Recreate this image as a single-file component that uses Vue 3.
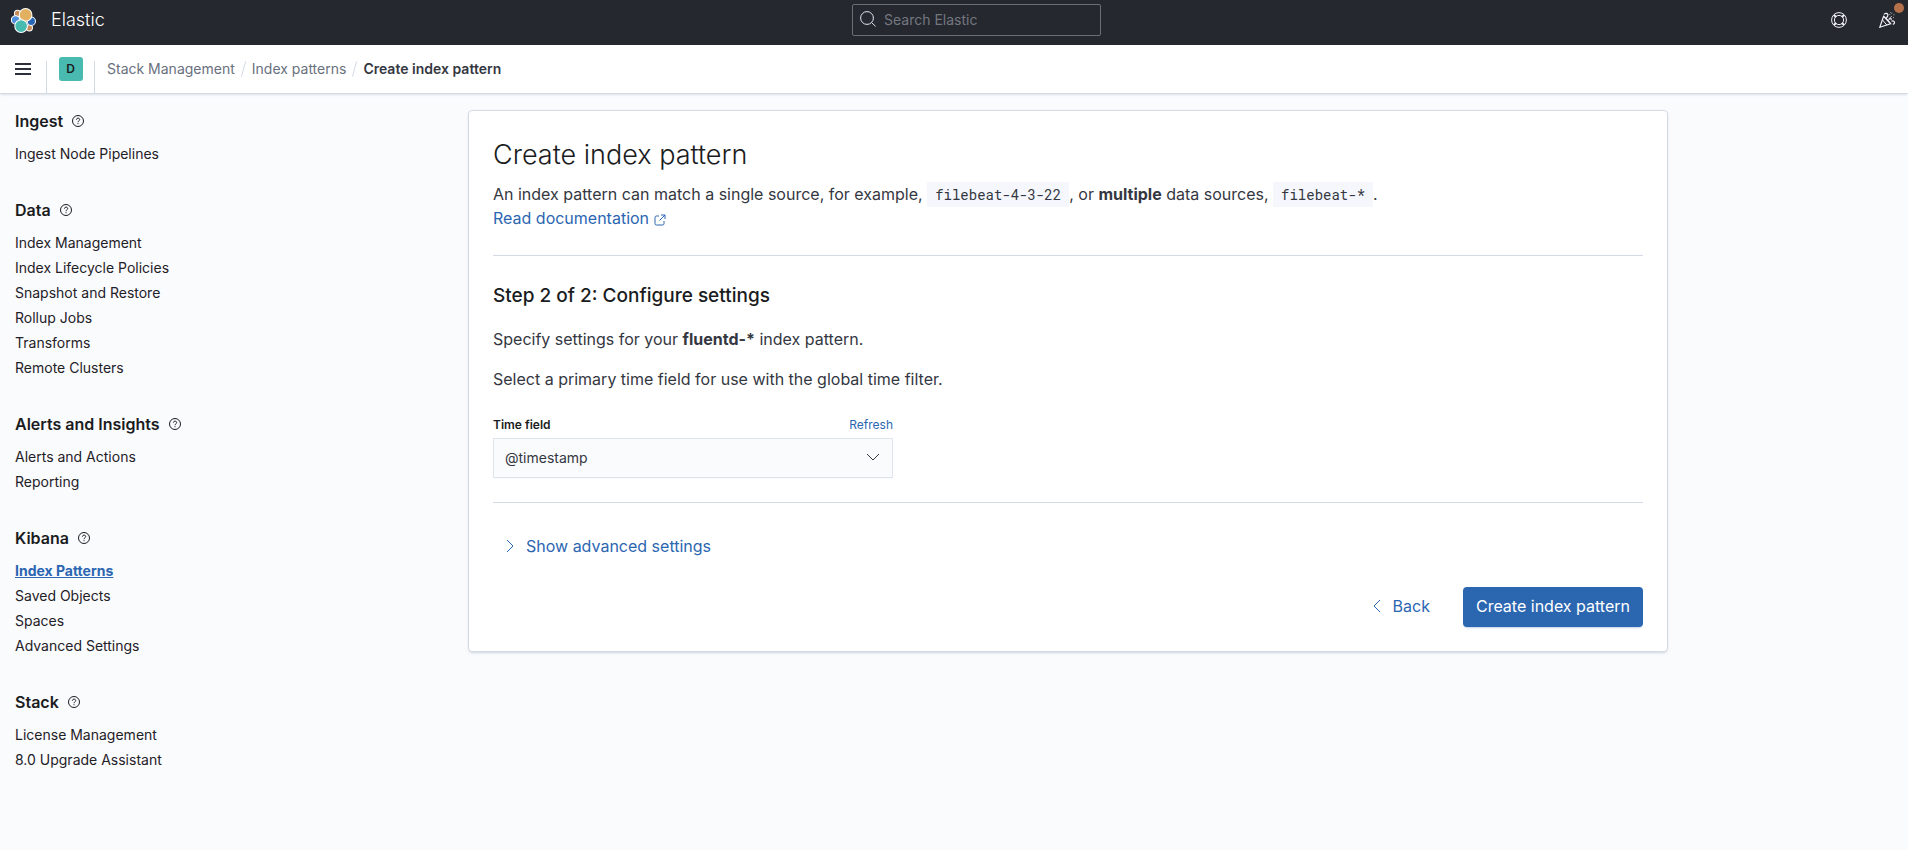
<script setup>
import { ref } from 'vue'

const sections = [
  { title: 'Ingest', items: ['Ingest Node Pipelines'] },
  {
    title: 'Data',
    items: [
      'Index Management',
      'Index Lifecycle Policies',
      'Snapshot and Restore',
      'Rollup Jobs',
      'Transforms',
      'Remote Clusters',
    ],
  },
  { title: 'Alerts and Insights', items: ['Alerts and Actions', 'Reporting'] },
  { title: 'Kibana', items: ['Index Patterns', 'Saved Objects', 'Spaces', 'Advanced Settings'] },
  { title: 'Stack', items: ['License Management', '8.0 Upgrade Assistant'] },
]
const current = 'Index Patterns'
const query = ref('')
const timeField = ref('@timestamp')
</script>

<template>
  <div class="page">
    <header class="topbar">
      <a href="#" class="brand">
        <svg class="brand-logo" viewBox="0 0 24 24" aria-hidden="true">
          <g stroke="#fff" stroke-width="1">
            <circle cx="6.3" cy="5.2" r="3" fill="#c58a58" />
            <circle cx="17.6" cy="19" r="3" fill="#c58a58" />
            <circle cx="4.4" cy="11.4" r="4" fill="#4f8fdb" />
            <circle cx="19.5" cy="12.7" r="4" fill="#2766b5" />
            <circle cx="14" cy="6.6" r="6.1" fill="#e3b062" />
            <circle cx="9.7" cy="17.4" r="6.1" fill="#47bbb0" />
          </g>
        </svg>
        <span>Elastic</span>
      </a>
      <div class="search">
        <svg class="search-icon" viewBox="0 0 16 16" aria-hidden="true">
          <circle cx="7" cy="7" r="6.4" />
          <path d="M11.6 11.6L15.6 15.4" />
        </svg>
        <input v-model="query" type="search" placeholder="Search Elastic" aria-label="Search Elastic" />
      </div>
      <div class="actions">
        <button type="button" class="icon-button" aria-label="Help">
          <svg viewBox="0 0 16 16" aria-hidden="true">
            <circle cx="8" cy="8" r="7.4" />
            <circle cx="8" cy="8" r="4.6" />
            <path
              stroke-width="2"
              d="M3 3L5 5M13 3L11 5M3 13L5 11M13 13L11 11"
            />
          </svg>
        </button>
        <button type="button" class="icon-button" aria-label="What's new">
          <svg viewBox="0 0 16 16" aria-hidden="true">
            <path stroke-width="1.2" d="M4.6 4.3L0.8 15.2L11.6 11.8Z" />
            <path d="M4.6 4.3C6.6 5.4 10.2 8.8 11.6 11.8M3.4 7.8L7.8 13" />
            <path stroke-width="1.2" d="M5 2.6C6 .6 9.4 1 8.8 3.6C8.6 4.7 7.4 5.5 7.6 6.3M9.6 7.6C10.8 6.2 12 6.6 12.6 7.6M12.4 9.2C14.6 8.2 16 10 15.2 11.6C15 12 14.4 12.4 13.8 12.4" />
            <path d="M11 5.8L12.6 4.2M10.8 2.2V2.9M12.8 .8V1.5M14.6 2.8H15.3M14 5.6H14.7M11.4 .4H11.9" />
          </svg>
          <span class="dot"></span>
        </button>
      </div>
    </header>

    <div class="subbar">
      <button type="button" class="menu-button" aria-label="Toggle primary navigation">
        <svg viewBox="0 0 16 12" aria-hidden="true"><path d="M0 0H16V2H0zM0 5H16V7H0zM0 10H16V12H0z" /></svg>
      </button>
      <div class="space-cell">
        <button type="button" class="avatar" aria-label="D, default space">D</button>
      </div>
      <nav class="breadcrumbs" aria-label="Breadcrumbs">
        <a href="#">Stack Management</a>
        <i class="slash"></i>
        <a href="#">Index patterns</a>
        <i class="slash"></i>
        <strong aria-current="page">Create index pattern</strong>
      </nav>
    </div>

    <div class="body">
      <nav class="sidebar" aria-label="Stack Management">
        <section v-for="s in sections" :key="s.title">
          <h2>
            {{ s.title }}
            <svg class="help" viewBox="0 0 12 12" aria-hidden="true">
              <circle cx="6" cy="6" r="5.5" />
              <path d="M4.4 4.7C4.4 2.6 7.7 2.6 7.7 4.6C7.7 5.8 6 5.8 6 7.2M6 8.2V9.2" />
            </svg>
          </h2>
          <ul>
            <li v-for="item in s.items" :key="item">
              <a href="#" :class="{ selected: item === current }">{{ item }}</a>
            </li>
          </ul>
        </section>
      </nav>

      <main>
        <div class="panel">
          <h1>Create index pattern</h1>
          <p class="intro">
            An index pattern can match a single source, for example, <code>filebeat-4-3-22</code>, or
            <strong>multiple</strong> data sources, <code>filebeat-*</code>.<br />
            <a href="#">Read documentation
              <svg class="external" viewBox="0 0 12 12" aria-hidden="true">
                <path d="M5 2H2.5Q1 2 1 3.500V9.500Q1 11 2.500 11H8.500Q10 11 10 9.500V7M7 1H11V5M11 1L5.500 6.500" />
              </svg></a>
          </p>
          <hr />
          <h2>Step 2 of 2: Configure settings</h2>
          <p>Specify settings for your <strong>fluentd-*</strong> index pattern.</p>
          <p>Select a primary time field for use with the global time filter.</p>
          <div class="field">
            <div class="field-head">
              <label for="time-field">Time field</label>
              <button type="button" class="refresh">Refresh</button>
            </div>
            <div class="select-wrap">
              <select id="time-field" v-model="timeField">
                <option>@timestamp</option>
              </select>
              <svg class="chevron" viewBox="0 0 16 16" aria-hidden="true"><path d="M2 5L8 11L14 5" /></svg>
            </div>
          </div>
          <hr />
          <button type="button" class="link-button advanced">
            <svg viewBox="0 0 16 16" aria-hidden="true"><path d="M5 2L11 8L5 14" /></svg>
            Show advanced settings
          </button>
          <div class="footer">
            <button type="button" class="link-button">
              <svg viewBox="0 0 16 16" aria-hidden="true"><path d="M11 2L5 8L11 14" /></svg>
              Back
            </button>
            <button type="button" class="primary">Create index pattern</button>
          </div>
        </div>
      </main>
    </div>
  </div>
</template>

<style>
body {
  background: #fafbfd;
}
</style>

<style scoped>
.page,
.page * {
  box-sizing: border-box;
}
.page {
  min-height: 100vh;
  background: #fafbfd;
  color: #343741;
  font-family: Inter, "Liberation Sans", sans-serif;
  font-size: 16px;
  line-height: 24px;
}
button,
input,
select {
  font: inherit;
  color: inherit;
}
button {
  display: inline-flex;
  align-items: center;
  justify-content: center;
  padding: 0;
  border: 0;
  background: none;
  cursor: pointer;
}
a {
  color: #2b66b1;
  text-decoration: none;
}
svg {
  flex: none;
  fill: none;
  stroke: currentColor;
}
h1,
h2,
p,
ul {
  margin: 0;
  padding: 0;
}

.topbar {
  display: flex;
  justify-content: space-between;
  align-items: center;
  height: 45px;
  padding-bottom: 5px;
  background: #25282f;
}
.brand {
  display: flex;
  align-items: center;
  gap: 15px;
  width: 138px;
  padding-left: 11px;
  color: #fff;
  font-size: 18px;
  font-weight: 300;
}
.brand-logo {
  width: 25px;
  height: 25px;
}
.search {
  position: relative;
  width: 249px;
}
.search input {
  display: block;
  width: 100%;
  height: 32px;
  padding: 0 12px 2px 31px;
  border: 1px solid #6a6d73;
  border-radius: 2px;
  background: transparent;
  outline: none;
  color: #dfe5ef;
  font-size: 14px;
}
.search input::placeholder {
  color: #74777f;
  opacity: 1;
}
.search-icon {
  position: absolute;
  left: 8px;
  top: 7px;
  width: 16px;
  height: 16px;
  color: #dfe5ef;
}
.actions {
  display: flex;
  width: 93px;
}
.icon-button {
  position: relative;
  flex: none;
  width: 48px;
  height: 40px;
  color: #f0f2f8;
}
.icon-button svg {
  width: 16px;
  height: 16px;
}
.dot {
  position: absolute;
  left: 31px;
  top: 3px;
  width: 10px;
  height: 10px;
  border-radius: 50%;
  background: #b57149;
}

.subbar {
  display: flex;
  align-items: center;
  height: 49px;
  border-bottom: 1px solid #d3dae6;
  background: #fff;
  box-shadow: 0 2px 2px -1px rgba(152, 162, 179, 0.3);
}
.menu-button {
  width: 46px;
  height: 48px;
  color: #2c2f3a;
}
.menu-button svg {
  width: 16px;
  height: 12px;
  fill: currentColor;
  stroke: none;
}
.space-cell {
  display: flex;
  align-items: center;
  align-self: flex-end;
  justify-content: center;
  width: 49px;
  height: 32px;
  border: 1px solid #d3dae6;
  border-width: 0 1px;
}
.avatar {
  width: 24px;
  height: 24px;
  margin-bottom: 16px;
  border-radius: 3px;
  background: #49bab0;
  color: #1a1c21;
  font-size: 12px;
  font-weight: 600;
}
.breadcrumbs {
  display: flex;
  align-items: center;
  padding-left: 12px;
  font-size: 14px;
}
.breadcrumbs a {
  color: #69707d;
}
.breadcrumbs strong {
  color: #343741;
  font-weight: 600;
}
.slash {
  width: 1px;
  height: 16px;
  margin: 0 8px;
  background: #d3dae6;
  transform: rotate(15deg);
}

.body {
  display: grid;
  grid-template-columns: 228px minmax(0, 1fr);
}
.sidebar {
  padding: 15px 0 0 15px;
}
main {
  padding-top: 16px;
}
.sidebar section {
  margin-bottom: 32px;
}
.sidebar h2 {
  display: flex;
  align-items: center;
  gap: 9px;
  margin-bottom: 8px;
  color: #1a1c21;
  font-size: 16px;
  font-weight: 600;
  line-height: 24px;
}
.help {
  width: 12px;
  height: 12px;
}
.sidebar ul {
  list-style: none;
}
.sidebar li {
  font-size: 14px;
  line-height: 25px;
}
.sidebar li a {
  display: block;
  width: fit-content;
  color: #1f2127;
}
.sidebar li a.selected {
  color: #2b66b1;
  font-weight: 700;
  text-decoration: underline;
}

.panel {
  max-width: 1200px;
  margin: 0 auto;
  padding: 24px;
  border: 1px solid #d3dae6;
  border-radius: 4px;
  background: #fff;
  box-shadow: 0 2px 2px -1px rgba(152, 162, 179, 0.3), 0 1px 5px -2px rgba(152, 162, 179, 0.3);
}
.panel h1 {
  margin-bottom: 7px;
  color: #1a1c21;
  font-size: 27px;
  font-weight: 300;
  line-height: 40px;
}
.panel h2 {
  color: #1a1c21;
  font-size: 19px;
  font-weight: 500;
  line-height: 32px;
}
.panel h2 ~ p {
  margin-top: 16px;
}
.panel h2 + p {
  margin-top: 15px;
}
.panel strong {
  font-weight: 700;
}
.panel hr {
  height: 1px;
  margin: 24px 0;
  border: 0;
  background: #d3dae6;
}
.panel .intro + hr {
  margin-top: 25px;
}
code {
  padding: 3px 8px;
  background: #f5f7fc;
  font-family: "Roboto Mono", "DejaVu Sans Mono", monospace;
  font-size: 14px;
  line-height: 1;
}
.external {
  width: 12px;
  height: 12px;
  vertical-align: -2px;
}
.panel .field {
  max-width: 400px;
  margin-top: 25px;
}
.field-head {
  display: flex;
  justify-content: space-between;
  margin-bottom: 4px;
  font-size: 12px;
  line-height: 18px;
}
.field-head label {
  color: #1a1c21;
  font-weight: 600;
}
.refresh {
  color: #2b66b1;
}
.select-wrap {
  position: relative;
}
.select-wrap select {
  display: block;
  appearance: none;
  width: 100%;
  height: 40px;
  padding: 0 40px 0 11px;
  border: 1px solid #dfe3ec;
  border-radius: 0;
  background: #fafbfd;
  box-shadow: 0 1px 1px -1px rgba(152, 162, 179, 0.3);
  font-size: 14px;
}
.chevron {
  position: absolute;
  right: 12px;
  top: 11px;
  width: 16px;
  height: 16px;
  pointer-events: none;
}
.link-button {
  gap: 8px;
  height: 40px;
  padding: 0 9px 2px;
  color: #2b66b1;
}
.link-button svg {
  width: 16px;
  height: 16px;
}
.advanced {
  display: flex;
}
.footer {
  display: flex;
  justify-content: flex-end;
  gap: 24px;
  margin-top: 20px;
}
.primary {
  height: 40px;
  padding: 0 13px 2px;
  border-radius: 4px;
  background: #2b66b1;
  box-shadow: 0 2px 2px -1px rgba(43, 102, 177, 0.3);
  color: #fff;
}
</style>
